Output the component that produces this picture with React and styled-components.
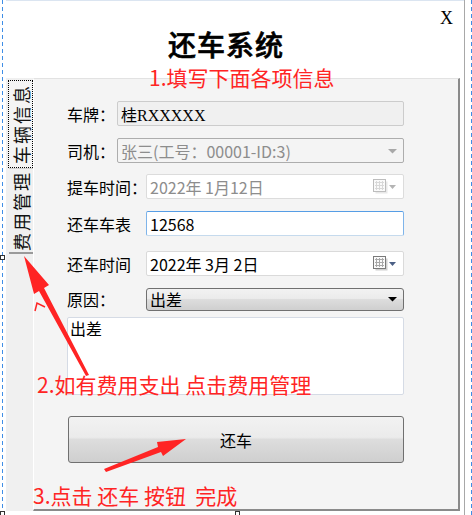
import React from "react";
import styled, { createGlobalStyle } from "styled-components";

const GlobalStyle = createGlobalStyle`
    html, body {
        margin: 0;
        padding: 0;
        background: #ffffff;
    }
    body {
        font-family: "Noto Sans CJK SC", "Liberation Sans", sans-serif;
    }
`;

const CJK = `"Noto Sans CJK SC", "Liberation Sans", sans-serif`;
const RED = "#ff2424";

const Page = styled.div`
    position: relative;
    display: flex;
    width: 472px;
    height: 515px;
    overflow: hidden;
    background: #ffffff;
`;

const Guide = styled.div`
    position: relative;
    width: ${(p) => p.$width}px;
    flex: none;
    background: ${(p) => p.$bg || "#ffffff"};
    border-left: ${(p) => (p.$edge ? "1px solid #a8a8a8" : "none")};
    &::after {
        content: "";
        position: absolute;
        top: 0;
        bottom: 0;
        ${(p) => (p.$right ? "right: 0;" : "left: 2px;")}
        width: 1px;
        background: repeating-linear-gradient(to bottom, #3f8ee6 0 4px, transparent 4px 7px);
    }
`;

const Form = styled.div`
    flex: 1;
    display: flex;
    flex-direction: column;
    background: #ffffff;
    border-top: 1px solid #dbe5f1;
`;

const Header = styled.div`
    height: 77px;
    display: flex;
    align-items: flex-start;
    flex: none;
`;

const Title = styled.h1`
    margin: 24px 0 0 162px;
    font-family: ${CJK};
    font-size: 28px;
    font-weight: 500;
    line-height: 38px;
    letter-spacing: 1px;
    color: #000;
    -webkit-text-stroke: 0.6px #000;
`;

const CloseX = styled.div`
    margin: 5px 11px 0 auto;
    font-family: "Liberation Serif", serif;
    font-size: 18px;
    line-height: 24px;
    color: #000;
`;

const TabArea = styled.div`
    flex: 1;
    display: flex;
    margin: 0 4px 4px 0;
    background: #f0f0f0;
`;

const TabStrip = styled.div`
    width: 27px;
    flex: none;
    display: flex;
    flex-direction: column;
    padding-top: 2px;
`;

const Tab = styled.div`
    height: ${(p) => (p.$active ? 88 : 86)}px;
    margin-left: ${(p) => (p.$active ? 2 : 3)}px;
    display: flex;
    align-items: center;
    justify-content: center;
    box-sizing: border-box;
    background: ${(p) => (p.$active ? "#f4f4f4" : "#f0f0f0")};
    border-top: ${(p) => (p.$active ? "none" : "1px solid #d0d0d0")};
    border-bottom: ${(p) => (p.$active ? "none" : "2px solid #9a9a9a")};
    outline: ${(p) => (p.$active ? "1px dotted #000" : "none")};
    outline-offset: -1px;
`;

const TabText = styled.span`
    writing-mode: vertical-rl;
    text-orientation: sideways;
    transform: rotate(180deg);
    font-family: ${CJK};
    font-size: 18px;
    letter-spacing: 2px;
    color: #111;
`;

const TabPage = styled.div`
    flex: 1;
    display: flex;
    flex-direction: column;
    background: #f4f4f4;
    border-top: 1px solid #e2e2e2;
    border-left: 1px solid #ffffff;
    border-right: 2px solid #8a8a8a;
    border-bottom: 2px solid #8a8a8a;
    padding: 22px 54px 0 33px;
`;

const Field = styled.div`
    display: grid;
    grid-template-columns: ${(p) => p.$label}px 1fr;
    align-items: center;
    margin-top: ${(p) => p.$top || 0}px;
`;

const Label = styled.span`
    font-family: ${CJK};
    font-size: 16px;
    color: #000;
    white-space: nowrap;
`;

const Box = styled.div`
    height: ${(p) => p.$h || 25}px;
    box-sizing: border-box;
    display: flex;
    align-items: center;
    padding: 0 6px 0 3px;
    border-radius: 2px;
    font-family: ${CJK};
    font-size: 16px;
    white-space: pre;
    color: ${(p) => (p.$muted ? "#8d8d8d" : "#000")};
    background: ${(p) => p.$bg || "#ffffff"};
    border: 1px solid ${(p) => p.$border || "#dadada"};
`;

const FocusBox = styled(Box)`
    border-color: #7eb4ea;
    border-top-color: #569de5;
    border-bottom-color: #c5daed;
`;

const DropBox = styled(Box)`
    border-radius: 3px;
    border-color: #707070;
    background: linear-gradient(#f2f2f2, #ebebeb 45%, #dddddd 50%, #cfcfcf);
`;

const BoxText = styled.span`
    flex: 1;
    overflow: hidden;
    font-family: ${(p) => (p.$serif ? `"Liberation Serif", "Noto Sans CJK SC", serif` : "inherit")};
`;

const Memo = styled.div`
    margin-top: 6px;
    height: 78px;
    box-sizing: border-box;
    padding: 0 2px;
    background: #ffffff;
    border: 1px solid #d5dbe5;
    border-radius: 2px;
    font-family: ${CJK};
    font-size: 16px;
    line-height: 20px;
    color: #000;
`;

const Button = styled.div`
    margin: 21px 0 0 1px;
    height: 47px;
    box-sizing: border-box;
    display: flex;
    align-items: center;
    justify-content: center;
    border: 1px solid #707070;
    border-radius: 3px;
    background: linear-gradient(#f2f2f2, #ebebeb 45%, #dddddd 50%, #cfcfcf);
    font-family: ${CJK};
    font-size: 16px;
    color: #000;
`;

const Overlay = styled.div`
    position: absolute;
    inset: 0;
    pointer-events: none;
`;

const Note = styled.div`
    position: absolute;
    left: ${(p) => p.$x}px;
    top: ${(p) => p.$y}px;
    font-family: ${CJK};
    font-size: 21px;
    line-height: 26px;
    color: ${RED};
    white-space: pre;
`;

const Handle = styled.div`
    position: absolute;
    left: ${(p) => p.$x}px;
    top: ${(p) => p.$y}px;
    width: 5px;
    height: 5px;
    box-sizing: border-box;
    background: #ffffff;
    border: 1px solid #333;
`;

function Arrow({ muted, color = "#000" }) {
    return (
        <svg width="9" height="6" viewBox="0 0 9 6">
            <path d="M0 1 L9 1 L4.5 5.5 Z" fill={muted ? "#a8a8a8" : color} />
        </svg>
    );
}

function CalendarIcon({ muted }) {
    const edge = muted ? "#bdbdbd" : "#7a7a7a";
    const grid = muted ? "#d8d8d8" : "#a9a9a9";
    return (
        <svg width="24" height="15" viewBox="0 0 24 15">
            <rect x="2.5" y="2.5" width="12" height="12" fill={muted ? "#e8e8e8" : "#cfcfcf"} />
            <rect x="0.5" y="0.5" width="12" height="12" fill="#fafafa" stroke={edge} />
            {[3.5, 6.5, 9.5].map((v) => (
                <g key={v}>
                    <line x1={v} y1="2" x2={v} y2="11" stroke={grid} />
                    <line x1="2" y1={v} x2="11" y2={v} stroke={grid} />
                </g>
            ))}
            <path d="M16 6 L23 6 L19.5 10 Z" fill={muted ? "#b4b4b4" : "#4b5f85"} />
        </svg>
    );
}

export default function App() {
    return (
        <>
            <GlobalStyle />
            <Page>
                <Guide $width={6} />
                <Form>
                    <Header>
                        <Title>还车系统</Title>
                        <CloseX>X</CloseX>
                    </Header>
                    <TabArea>
                        <TabStrip>
                            <Tab $active>
                                <TabText>车辆信息</TabText>
                            </Tab>
                            <Tab>
                                <TabText>费用管理</TabText>
                            </Tab>
                        </TabStrip>
                        <TabPage>
                            <Field $label={50}>
                                <Label>车牌：</Label>
                                <Box $bg="#f0f0f0" $border="#cccccc">
                                    <BoxText $serif>桂RXXXXX</BoxText>
                                </Box>
                            </Field>
                            <Field $label={50} $top={12}>
                                <Label>司机：</Label>
                                <Box $muted $bg="#f4f4f4" $border="#adadad">
                                    <BoxText>张三(工号：00001-ID:3)</BoxText>
                                    <Arrow muted />
                                </Box>
                            </Field>
                            <Field $label={79} $top={11}>
                                <Label>提车时间：</Label>
                                <Box $muted $border="#dcdcdc">
                                    <BoxText>2022年 1月12日</BoxText>
                                    <CalendarIcon muted />
                                </Box>
                            </Field>
                            <Field $label={79} $top={12}>
                                <Label>还车车表</Label>
                                <FocusBox>
                                    <BoxText>12568</BoxText>
                                </FocusBox>
                            </Field>
                            <Field $label={79} $top={15}>
                                <Label>还车时间</Label>
                                <Box>
                                    <BoxText>2022年 3月 2日</BoxText>
                                    <CalendarIcon />
                                </Box>
                            </Field>
                            <Field $label={79} $top={11}>
                                <Label>原因：</Label>
                                <DropBox $h={23}>
                                    <BoxText>出差</BoxText>
                                    <Arrow />
                                </DropBox>
                            </Field>
                            <Memo>出差</Memo>
                            <Button>还车</Button>
                        </TabPage>
                    </TabArea>
                </Form>
                <Guide $width={7} $right $edge />
                <Overlay>
                    <svg width="472" height="515" viewBox="0 0 472 515" style={{ position: "absolute", left: 0, top: 0 }}>
                        <polygon
                            points="24,256 49,285 44,288 89,375 86,376 39,291 34,294"
                            fill={RED}
                        />
                        <polyline points="35,311 37,303 45,307" fill="none" stroke={RED} strokeWidth="1.5" />
                        <polygon
                            points="186,439 163,456 161,452 106,472 104,469 158,447 157,442"
                            fill={RED}
                        />
                    </svg>
                    <Note $x={149} $y={64}>1.填写下面各项信息</Note>
                    <Note $x={37} $y={371}>2.如有费用支出 点击费用管理</Note>
                    <Note $x={33} $y={482}>3.点击 还车 按钮  完成</Note>
                    <Handle $x={0} $y={255} />
                    <Handle $x={0} $y={511} />
                    <Handle $x={235} $y={511} />
                </Overlay>
            </Page>
        </>
    );
}
